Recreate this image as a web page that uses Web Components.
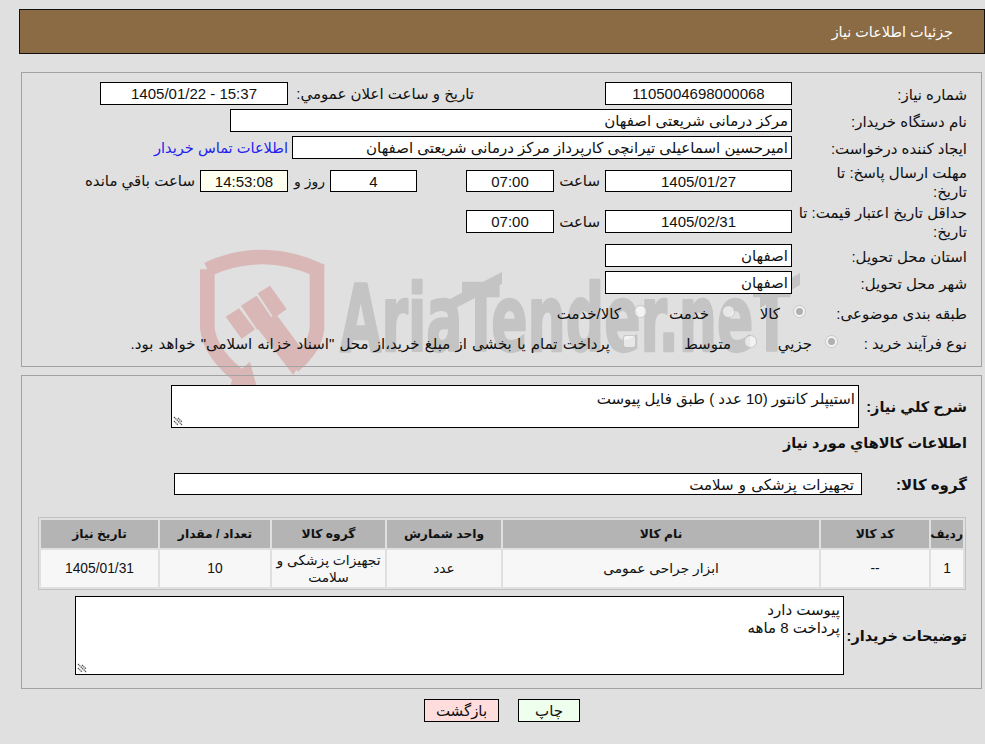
<!DOCTYPE html>
<html lang="fa" dir="rtl">
<head>
<meta charset="utf-8">
<title>جزئیات اطلاعات نیاز</title>
<style>
  html, body { margin: 0; padding: 0; }
  body {
    background: #e0e0e0;
    color: #111;
    font: 15px "Liberation Sans", "DejaVu Sans", sans-serif;
    height: 744px;
    overflow: hidden;
    position: relative;
  }
  .t { white-space: nowrap; }
  a { color: #2222ee; text-decoration: none; white-space: nowrap; font-size: 14.6px; }
</style>
</head>
<body>
<water-mark></water-mark>
<page-header>جزئیات اطلاعات نیاز</page-header>

<info-panel style="margin-top:18px; height:295px">
  <form-row label="شماره نیاز:" h="23">
    <text-field style="width:187px" center>1105004698000068</text-field>
    <span class="t" style="margin-right:131px; width:181px">تاریخ و ساعت اعلان عمومي:</span>
    <text-field style="width:188px; margin-right:5px" center>15:37 - 1405/01/22</text-field>
  </form-row>
  <form-row label="نام دستگاه خریدار:" h="23">
    <text-field style="width:562px">مرکز درمانی شریعتی اصفهان</text-field>
  </form-row>
  <form-row label="ایجاد کننده درخواست:" h="23">
    <text-field style="width:500px">امیرحسین اسماعیلی تیرانچی کارپرداز مرکز درمانی شریعتی اصفهان</text-field>
    <a href="#" style="margin-right:4px">اطلاعات تماس خریدار</a>
  </form-row>
  <form-row label="مهلت ارسال پاسخ: تا<br>تاریخ:" h="36">
    <text-field style="width:187px; height:22px" center>1405/01/27</text-field>
    <span class="t" style="margin-right:5px; width:46px">ساعت</span>
    <text-field style="width:88px; height:22px" center>07:00</text-field>
    <text-field style="width:87px; height:22px; margin-right:49px" center>4</text-field>
    <span class="t" style="margin-right:5px; width:37px; font-size:14px">روز و</span>
    <text-field style="width:88px; height:22px; --bg:#fffff0" center>14:53:08</text-field>
    <span class="t" style="margin-right:5px">ساعت باقي مانده</span>
  </form-row>
  <form-row label="حداقل تاریخ اعتبار قیمت: تا<br>تاریخ:" h="37">
    <text-field style="width:187px" center>1405/02/31</text-field>
    <span class="t" style="margin-right:5px; width:46px">ساعت</span>
    <text-field style="width:88px" center>07:00</text-field>
  </form-row>
  <form-row label="استان محل تحویل:" h="23">
    <text-field style="width:187px">اصفهان</text-field>
  </form-row>
  <form-row label="شهر محل تحویل:" h="23">
    <text-field style="width:187px">اصفهان</text-field>
  </form-row>
  <form-row label="طبقه بندی موضوعی:" h="30" lw="161">
    <choice-item style="width:71px" checked>کالا</choice-item>
    <choice-item style="width:88px">خدمت</choice-item>
    <choice-item style="width:92px">کالا/خدمت</choice-item>
  </form-row>
  <form-row label="نوع فرآیند خرید :" h="22" lw="129">
    <choice-item style="width:81px" checked>جزيي</choice-item>
    <choice-item style="width:121px">متوسط</choice-item>
    <choice-item square style="word-spacing:1px">پرداخت تمام یا بخشی از مبلغ خرید،از محل "اسناد خزانه اسلامی" خواهد بود.</choice-item>
  </form-row>
</info-panel>

<info-panel style="margin-top:8px; height:314px">
  <note-row label="شرح کلي نياز:" lw="108" style="--h:43px; --w:688px">استیپلر کانتور (10 عدد ) طبق فایل پیوست</note-row>
  <section-title>اطلاعات کالاهاي مورد نياز</section-title>
  <form-row label="گروه کالا:" h="22" lw="105" bold>
    <text-field style="width:688px; height:22px; padding-right:7px; word-spacing:1px">تجهیزات پزشکی و سلامت</text-field>
  </form-row>
  <goods-table></goods-table>
  <note-row label="توضیحات خریدار:" lw="123" style="--h:79px; --w:769px; margin-top:2px">پیوست دارد
پرداخت 8 ماهه</note-row>
</info-panel>

<action-bar>
  <action-button style="--bg:#eeffee; width:62px">چاپ</action-button>
  <action-button style="--bg:#ffdddd; width:75px">بازگشت</action-button>
</action-bar>

<script>
function shadow(el, html) {
  el.attachShadow({ mode: 'open' }).innerHTML = html;
}

class WaterMark extends HTMLElement {
  connectedCallback() {
    shadow(this, `
      <style>
        :host { position: absolute; left: 0; top: 240px; width: 985px; height: 250px; z-index: -1; pointer-events: none; direction: ltr; }
        svg { display: block; }
        text { font-family: "Liberation Sans Narrow", "DejaVu Sans Condensed", sans-serif; font-weight: 700; fill: #c4c4c4; stroke: #c4c4c4; stroke-width: 7; stroke-linejoin: round; }
      </style>
      <svg width="985" height="250" viewBox="0 0 2955 750">
        <g fill="none" stroke="#dab7b7" stroke-width="44">
          <path d="M622 88 Q785 14 951 88 L951 265 Q945 325 880 378"/>
          <path d="M622 88 L622 265 Q630 345 735 422"/>
        </g>
        <g fill="#dab7b7">
          <polygon points="770,262 828,222 915,340 880,405"/>
          <polygon points="677,230 717,205 765,268 725,297"/>
          <polygon points="723,197 770,167 820,240 772,270"/>
          <polygon points="773,160 810,137 860,207 822,235"/>
          <polygon points="750,365 770,440 690,440 700,408"/>
        </g>
        <text x="1020" y="332" font-size="280" textLength="1350" lengthAdjust="spacingAndGlyphs">AriaTender.neT</text>
        <g fill="#c4c4c4">
          <polygon points="1344,180 1506,96 1506,132 1344,216"/>
          <polygon points="2280,168 2400,99 2400,135 2280,204"/>
        </g>
      </svg>`);
  }
}

class PageHeader extends HTMLElement {
  connectedCallback() {
    shadow(this, `
      <style>
        :host { display: flex; align-items: center; box-sizing: border-box; height: 45px; width: 966px; margin-top: 9px;
          background: #8b6b43; border: 1px solid #111; color: #fff; padding-right: 31px; font-size: 14.4px; }
      </style>
      <slot></slot>`);
  }
}

class InfoPanel extends HTMLElement {
  connectedCallback() {
    shadow(this, `
      <style>
        :host { display: flex; flex-direction: column; gap: 4px; box-sizing: border-box; width: 961px; margin-right: 3px;
          border: 1px solid #a2a2a2; padding: 9px 14px 0 0; }
      </style>
      <slot></slot>`);
  }
}

class FormRow extends HTMLElement {
  connectedCallback() {
    const lw = this.getAttribute('lw') || 175;
    const bold = this.hasAttribute('bold') ? 700 : 400;
    shadow(this, `
      <style>
        :host { display: flex; flex: none; align-items: center; height: ${this.getAttribute('h')}px; }
        .label { flex: none; width: ${lw}px; box-sizing: border-box; padding-top: 1px; font-weight: ${bold}; line-height: 19px; white-space: nowrap; }
      </style>
      <div class="label">${this.getAttribute('label')}</div>
      <slot></slot>`);
  }
}

class TextField extends HTMLElement {
  connectedCallback() {
    const align = this.hasAttribute('center') ? 'center' : 'right';
    shadow(this, `
      <style>
        :host { display: block; flex: none; box-sizing: border-box; height: 23px; line-height: 21px; padding: 0 3px; white-space: nowrap; overflow: hidden;
          background: var(--bg, #fff); border: 1px solid #000; text-align: ${align}; }
      </style>
      <slot></slot>`);
  }
}

class ChoiceItem extends HTMLElement {
  connectedCallback() {
    const radius = this.hasAttribute('square') ? '3px' : '50%';
    const dot = this.hasAttribute('checked') ? '<i></i>' : '';
    shadow(this, `
      <style>
        :host { display: flex; flex: none; align-items: center; gap: 13px; white-space: nowrap; }
        b { display: flex; align-items: center; justify-content: center; flex: none; width: 11px; height: 11px; margin-top: -3px;
          background: rgba(255,255,255,.6); border: 1px solid rgba(150,150,150,.45); border-radius: ${radius}; }
        i { width: 7px; height: 7px; border-radius: 50%; background: #b0b0b0; }
        span { position: relative; top: 1px; }
      </style>
      <b>${dot}</b><span><slot></slot></span>`);
  }
}

class NoteRow extends HTMLElement {
  connectedCallback() {
    shadow(this, `
      <style>
        :host { display: flex; flex: none; align-items: center; }
        .label { flex: none; width: ${this.getAttribute('lw')}px; box-sizing: border-box; font-weight: 700; font-size: 14.5px; white-space: nowrap; }
        .box { position: relative; box-sizing: border-box; width: var(--w); height: var(--h); padding: 4px 3px 0; line-height: 18px;
          background: #fff; border: 1px solid #000; white-space: pre-line; overflow: hidden; }
        svg { position: absolute; left: 1px; bottom: 1px; }
      </style>
      <div class="label">${this.getAttribute('label')}</div>
      <div class="box"><slot></slot>
        <svg width="10" height="10" viewBox="0 0 10 10" stroke="#555" stroke-width="1.3" fill="none">
          <path d="M1 1l8 8M1 5l4 4M5 2l4 4" stroke-dasharray="1.4 .6"/>
        </svg>
      </div>`);
  }
}

class SectionTitle extends HTMLElement {
  connectedCallback() {
    shadow(this, `
      <style>
        :host { display: flex; flex: none; align-items: center; height: 22px; margin-bottom: 15px; font-weight: 700; font-size: 14.5px; }
      </style>
      <slot></slot>`);
  }
}

class GoodsTable extends HTMLElement {
  connectedCallback() {
    const cols = [['ردیف', 32, '1'], ['کد کالا', 108, '--'], ['نام کالا', 316, 'ابزار جراحی عمومی'], ['واحد شمارش', 114, 'عدد'],
      ['گروه کالا', 113, 'تجهیزات پزشکی و سلامت'], ['تعداد / مقدار', 110, '10'], ['تاریخ نیاز', 117, '1405/01/31']];
    shadow(this, `
      <style>
        :host { display: block; flex: none; width: 928px; margin: 18px 1px 0 0; }
        table { width: 928px; box-sizing: border-box; table-layout: fixed; border: 1px solid #c2c2c2; border-spacing: 2px; font-size: 13.8px; }
        th { height: 28px; padding: 0; background: #b4b4b4; font-size: 12.3px; }
        td { height: 37px; padding: 0 3px; background: #f7f7f7; text-align: center; line-height: 17px; }
      </style>
      <table>
        <colgroup>${cols.map(c => `<col style="width:${c[1]}px">`).join('')}</colgroup>
        <tr>${cols.map(c => `<th>${c[0]}</th>`).join('')}</tr>
        <tr>${cols.map(c => `<td>${c[2]}</td>`).join('')}</tr>
      </table>`);
  }
}

class ActionBar extends HTMLElement {
  connectedCallback() {
    shadow(this, `
      <style>
        :host { display: flex; gap: 19px; margin: 10px 405px 0 0; }
      </style>
      <slot></slot>`);
  }
}

class ActionButton extends HTMLElement {
  connectedCallback() {
    shadow(this, `
      <style>
        :host { display: block; box-sizing: border-box; height: 23px; line-height: 22px; text-align: center; background: var(--bg); border: 1px solid #000; }
      </style>
      <slot></slot>`);
  }
}

customElements.define('water-mark', WaterMark);
customElements.define('page-header', PageHeader);
customElements.define('info-panel', InfoPanel);
customElements.define('form-row', FormRow);
customElements.define('text-field', TextField);
customElements.define('choice-item', ChoiceItem);
customElements.define('note-row', NoteRow);
customElements.define('section-title', SectionTitle);
customElements.define('goods-table', GoodsTable);
customElements.define('action-bar', ActionBar);
customElements.define('action-button', ActionButton);
</script>
</body>
</html>
